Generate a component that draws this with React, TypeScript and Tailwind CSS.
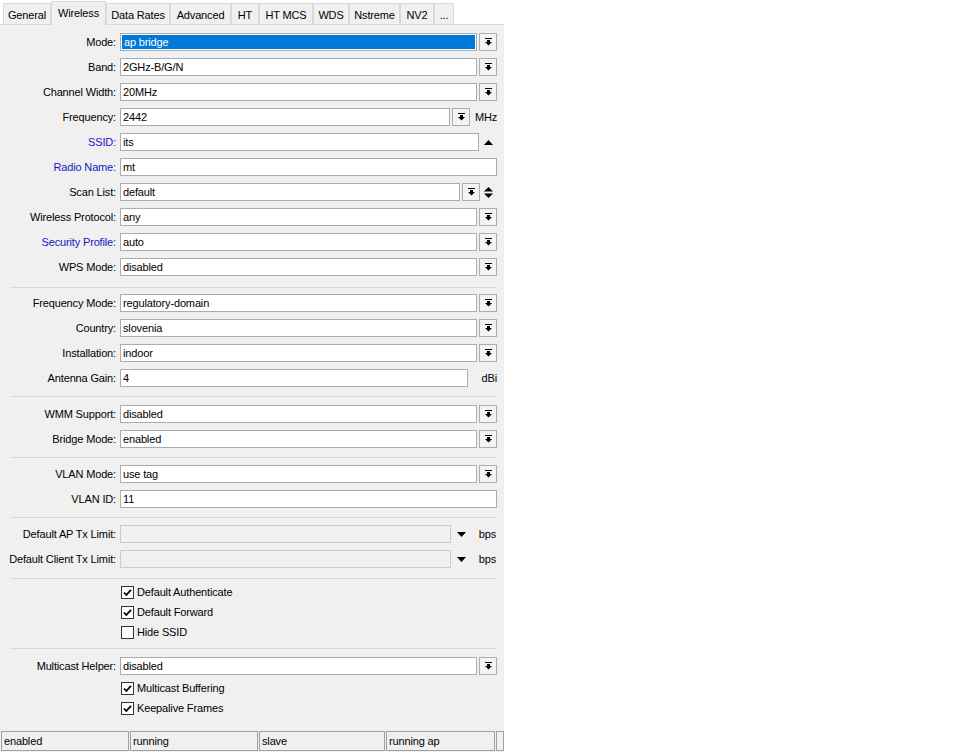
import React from "react";

type Tab = { name: string; w: string; active?: boolean };

const tabs: Tab[] = [
  { name: "General", w: "w-[48px]" },
  { name: "Wireless", w: "w-[55px]", active: true },
  { name: "Data Rates", w: "w-[64px]" },
  { name: "Advanced", w: "w-[61px]" },
  { name: "HT", w: "w-[28px]" },
  { name: "HT MCS", w: "w-[54px]" },
  { name: "WDS", w: "w-[36px]" },
  { name: "Nstreme", w: "w-[51px]" },
  { name: "NV2", w: "w-[34px]" },
  { name: "...", w: "w-[20px]" },
];

function DropIcon() {
  return (
    <svg width="7" height="8" viewBox="0 0 7 8" aria-hidden="true">
      <rect x="0" y="0" width="7" height="1" fill="#000" />
      <rect x="2" y="2" width="3" height="2" fill="#000" />
      <polygon points="0,4 7,4 3.5,7.5" fill="#000" />
    </svg>
  );
}

function DropButton() {
  return (
    <div className="ml-[2px] flex h-[18px] w-[18px] shrink-0 items-center justify-center border border-[#adadad] bg-[#f4f4f4]">
      <DropIcon />
    </div>
  );
}

function Field({ value = "", selected, disabled }: { value?: string; selected?: boolean; disabled?: boolean }) {
  if (selected) {
    return (
      <div className="flex h-[18px] min-w-0 flex-1 border border-[#abadb3] bg-white p-px">
        <div className="flex flex-1 items-center bg-[#0078d7] pl-[2px] text-white">{value}</div>
      </div>
    );
  }
  return (
    <div
      className={`flex h-[18px] min-w-0 flex-1 items-center border px-[2px] ${
        disabled ? "border-[#cccccc] bg-[#f0f0f0]" : "border-[#abadb3] bg-white"
      }`}
    >
      {value}
    </div>
  );
}

function Row({ label, blue, children }: { label: string; blue?: boolean; children: React.ReactNode }) {
  return (
    <div className="h-[25px] pt-[4px]">
      <div className="flex h-[18px] items-center">
        <div className={`w-[116px] shrink-0 whitespace-nowrap text-right ${blue ? "text-[#1717c4]" : "text-black"}`}>
          {label}:
        </div>
        <div className="ml-[4px] flex h-[18px] w-[377px] items-center">{children}</div>
      </div>
    </div>
  );
}

function Select({ value, selected }: { value: string; selected?: boolean }) {
  return (
    <>
      <Field value={value} selected={selected} />
      <DropButton />
    </>
  );
}

function Separator({ className }: { className: string }) {
  return (
    <div className={`pl-[10px] pr-[7px] ${className}`}>
      <div className="h-px bg-[#d7d7d7]" />
    </div>
  );
}

function Check({ label, checked }: { label: string; checked?: boolean }) {
  return (
    <div className="flex h-[20px] items-center pl-[121px]">
      <div className="flex h-[13px] w-[13px] items-center justify-center border border-[#333333] bg-white">
        {checked && (
          <svg width="9" height="9" viewBox="0 0 9 9" aria-hidden="true">
            <polyline points="1,4.5 3.3,7 8,1.8" fill="none" stroke="#000" strokeWidth="1.8" />
          </svg>
        )}
      </div>
      <span className="ml-[3px]">{label}</span>
    </div>
  );
}

function Unit({ text, className }: { text: string; className: string }) {
  return <div className={`shrink-0 text-black ${className}`}>{text}</div>;
}

function TxLimit({ label }: { label: string }) {
  return (
    <Row label={label}>
      <Field disabled />
      <div className="flex w-[46px] shrink-0 items-center">
        <svg className="ml-[6px]" width="9" height="5" viewBox="0 0 9 5" aria-hidden="true">
          <polygon points="0,0 9,0 4.5,5" fill="#000" />
        </svg>
        <span className="ml-auto pr-px">bps</span>
      </div>
    </Row>
  );
}

export default function App() {
  return (
    <div className="h-[752px] w-[960px] bg-white font-['Liberation_Sans',Arial,sans-serif] text-[11px] leading-none tracking-[-0.15px] text-black">
      <div className="flex h-full w-[504px] flex-col bg-[#f0f0f0]">
        {/* tab strip */}
        <div className="flex h-[25px] shrink-0 items-end bg-white pl-[3px] shadow-[inset_0_-1px_0_#d9d9d9]">
          {tabs.map((t) =>
            t.active ? (
              <div
                key={t.name}
                className={`${t.w} flex h-[24px] shrink-0 items-center justify-center border border-b-0 border-[#d9d9d9] bg-[#f0f0f0] pb-[1px]`}
              >
                {t.name}
              </div>
            ) : (
              <div
                key={t.name}
                className={`${t.w} mb-px flex h-[21px] shrink-0 items-center justify-center border border-b-0 border-[#d9d9d9] bg-[#f0f0f0] pt-[2px]`}
              >
                {t.name}
              </div>
            )
          )}
        </div>

        <div className="flex flex-1 flex-col pt-[4px]">
          <Row label="Mode">
            <Select value="ap bridge" selected />
          </Row>
          <Row label="Band">
            <Select value="2GHz-B/G/N" />
          </Row>
          <Row label="Channel Width">
            <Select value="20MHz" />
          </Row>
          <Row label="Frequency">
            <Field value="2442" />
            <DropButton />
            <Unit text="MHz" className="w-[27px] pl-[5px]" />
          </Row>
          <Row label="SSID" blue>
            <Field value="its" />
            <div className="flex w-[18px] shrink-0 justify-center pl-[1px]">
              <svg width="9" height="5" viewBox="0 0 9 5" aria-hidden="true">
                <polygon points="0,5 9,5 4.5,0" fill="#000" />
              </svg>
            </div>
          </Row>
          <Row label="Radio Name" blue>
            <Field value="mt" />
          </Row>
          <Row label="Scan List">
            <Field value="default" />
            <DropButton />
            <div className="flex w-[17px] shrink-0 justify-center">
              <svg width="9" height="11" viewBox="0 0 9 11" aria-hidden="true">
                <polygon points="0,4.5 9,4.5 4.5,0" fill="#000" />
                <polygon points="0,6.5 9,6.5 4.5,11" fill="#000" />
              </svg>
            </div>
          </Row>
          <Row label="Wireless Protocol">
            <Select value="any" />
          </Row>
          <Row label="Security Profile" blue>
            <Select value="auto" />
          </Row>
          <Row label="WPS Mode">
            <Select value="disabled" />
          </Row>

          <Separator className="pt-[8px] pb-[2px]" />

          <Row label="Frequency Mode">
            <Select value="regulatory-domain" />
          </Row>
          <Row label="Country">
            <Select value="slovenia" />
          </Row>
          <Row label="Installation">
            <Select value="indoor" />
          </Row>
          <Row label="Antenna Gain">
            <Field value="4" />
            <Unit text="dBi" className="w-[29px] text-right" />
          </Row>

          <Separator className="pt-[6px] pb-[4px]" />

          <Row label="WMM Support">
            <Select value="disabled" />
          </Row>
          <Row label="Bridge Mode">
            <Select value="enabled" />
          </Row>

          <Separator className="pt-[6px] pb-[3px]" />

          <Row label="VLAN Mode">
            <Select value="use tag" />
          </Row>
          <Row label="VLAN ID">
            <Field value="11" />
          </Row>

          <Separator className="pt-[6px] pb-[3px]" />

          <TxLimit label="Default AP Tx Limit" />
          <TxLimit label="Default Client Tx Limit" />

          <Separator className="pt-[7px] pb-[3px]" />

          <Check label="Default Authenticate" checked />
          <Check label="Default Forward" checked />
          <Check label="Hide SSID" />

          <Separator className="pt-[6px] pb-[4px]" />

          <Row label="Multicast Helper">
            <Select value="disabled" />
          </Row>
          <Check label="Multicast Buffering" checked />
          <Check label="Keepalive Frames" checked />

          {/* status bar */}
          <div className="mt-auto flex h-[21px] gap-px pb-px pl-px">
            <div className="flex w-[128px] items-center border border-[#a0a0a0] pl-[2px]">enabled</div>
            <div className="flex w-[128px] items-center border border-[#a0a0a0] pl-[2px]">running</div>
            <div className="flex w-[126px] items-center border border-[#a0a0a0] pl-[2px]">slave</div>
            <div className="flex w-[109px] items-center border border-[#a0a0a0] pl-[2px]">running ap</div>
            <div className="flex-1 border border-[#a0a0a0]" />
          </div>
        </div>
      </div>
    </div>
  );
}
